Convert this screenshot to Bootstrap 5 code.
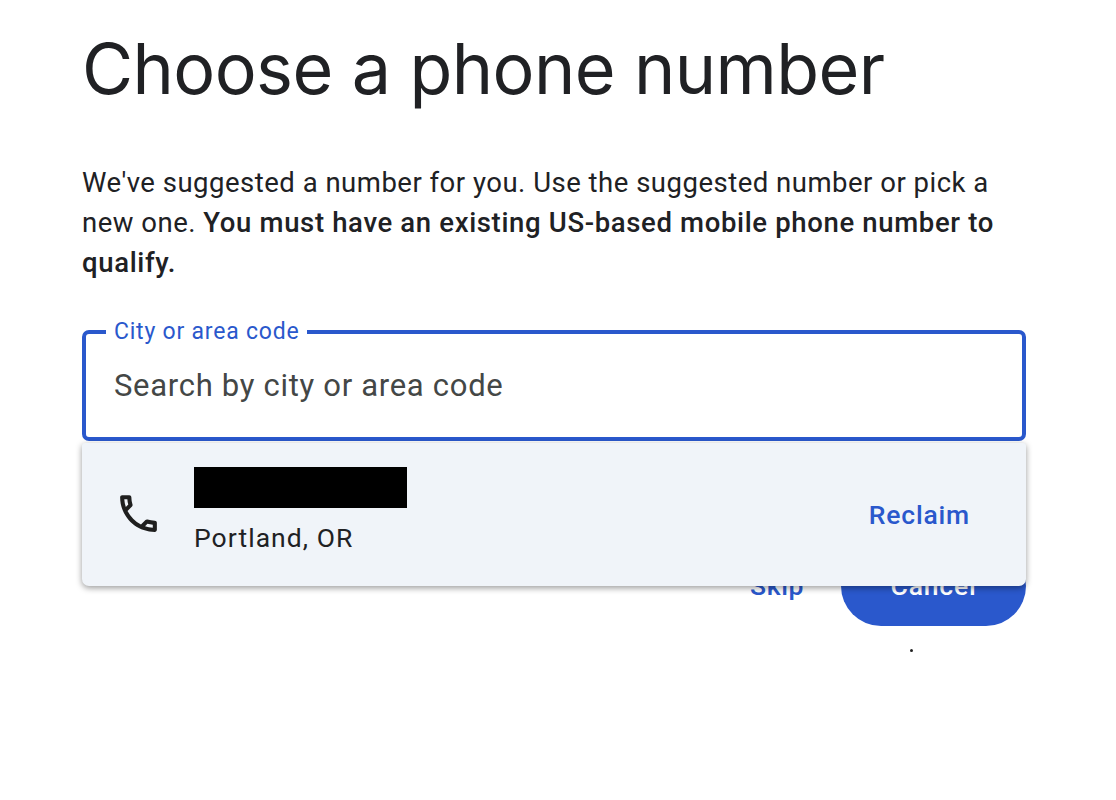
<!DOCTYPE html>
<html lang="en"><head><meta charset="utf-8"><title>Choose a phone number</title>
<link href="https://cdn.jsdelivr.net/npm/bootstrap@5.3.0/dist/css/bootstrap.min.css" rel="stylesheet">
<style>
html,body{height:800px;overflow:hidden;background:#fff}
body{font-family:"Roboto","Liberation Sans",sans-serif;color:#202124}
.page-wrap{padding:29px 90px 0 82px;position:relative}
.head-title{font-family:"Inter","Roboto",sans-serif;font-size:70px;line-height:80px;font-weight:400;margin:0 0 54px;letter-spacing:-.6px;white-space:nowrap}
.intro{font-size:27.5px;line-height:40px;margin:0 0 47px;letter-spacing:.5px;width:925px}
.intro b{font-weight:500;letter-spacing:.65px}
.field-box{position:relative;border:4px solid #2a58cc;border-radius:7px;height:111px;display:flex;align-items:center;padding:2px 28px 0;font-size:31px;letter-spacing:.7px;color:#444746}
.field-label{position:absolute;top:-17px;left:20px;background:#fff;padding:0 8px;font-size:23px;line-height:30px;color:#2a58cc;letter-spacing:.78px}
.below-wrap{position:relative;height:185px}
.drop-menu{position:absolute;left:0;right:0;top:2px;height:143px;background:#f0f4f9;border-radius:3px 3px 7px 7px;box-shadow:0 2px 6px rgba(0,0,0,.4);z-index:2;padding:0 56px 0 32px}
.phone-ico{width:49px;height:49px;margin-top:-2px;margin-right:31px;flex:none}
.item-text{margin-top:-9px}
.redact{width:213px;height:41px;background:#000}
.city{font-size:26.5px;line-height:30px;margin-top:15px;letter-spacing:1.05px}
.reclaim{font-size:26.5px;font-weight:500;color:#2a58cc;letter-spacing:.8px}
.act-row{position:absolute;right:0;top:105px;display:flex;align-items:center;gap:37px}
.skip-link{font-size:26.5px;font-weight:500;color:#2a58cc;letter-spacing:.6px}
.cancel-btn{background:#2a58cc;color:#fff;font-size:26.5px;font-weight:500;letter-spacing:.8px;border-radius:40px;height:80px;width:185px;display:flex;align-items:center;justify-content:center}
.dot{position:absolute;left:828px;top:208px;width:3px;height:3px;background:#222;border-radius:50%}
</style></head><body>
<div class="page-wrap">
<h1 class="head-title">Choose a phone number</h1>
<p class="intro">We've suggested a number for you. Use the suggested number or pick a new one. <b>You must have an existing US-based mobile phone number to qualify.</b></p>
<div class="field-box"><span class="field-label">City or area code</span>Search by city or area code</div>
<div class="below-wrap">
<div class="drop-menu d-flex align-items-center justify-content-between">
<div class="d-flex align-items-center">
<svg class="phone-ico" viewBox="0 0 24 24" fill="#1f1f1f"><path d="M6.54 5c.06.89.21 1.76.45 2.59l-1.2 1.2c-.41-1.2-.67-2.47-.76-3.79h1.51m9.860 12.020c.85.24 1.720.39 2.600.45v1.490c-1.320-.09-2.590-.35-3.800-.75l1.200-1.190M7.500 3H4c-.55 0-1 .45-1 1 0 9.390 7.610 17 17 17 .55 0 1-.45 1-1v-3.490c0-.55-.45-1-1-1-1.240 0-2.450-.2-3.570-.57-.1-.04-.21-.05-.31-.05-.26 0-.51.1-.71.29l-2.200 2.200c-2.830-1.450-5.150-3.760-6.590-6.590l2.200-2.200c.28-.28.36-.67.25-1.020C8.700 6.450 8.500 5.250 8.500 4c0-.55-.45-1-1-1z"/></svg>
<div class="item-text"><div class="redact"></div><div class="city">Portland, OR</div></div>
</div>
<span class="reclaim">Reclaim</span>
</div>
<div class="act-row"><span class="skip-link">Skip</span><span class="cancel-btn">Cancel</span></div>
<span class="dot"></span>
</div>
</div>
<script src="https://cdn.jsdelivr.net/npm/bootstrap@5.3.0/dist/js/bootstrap.bundle.min.js"></script>
</body></html>
